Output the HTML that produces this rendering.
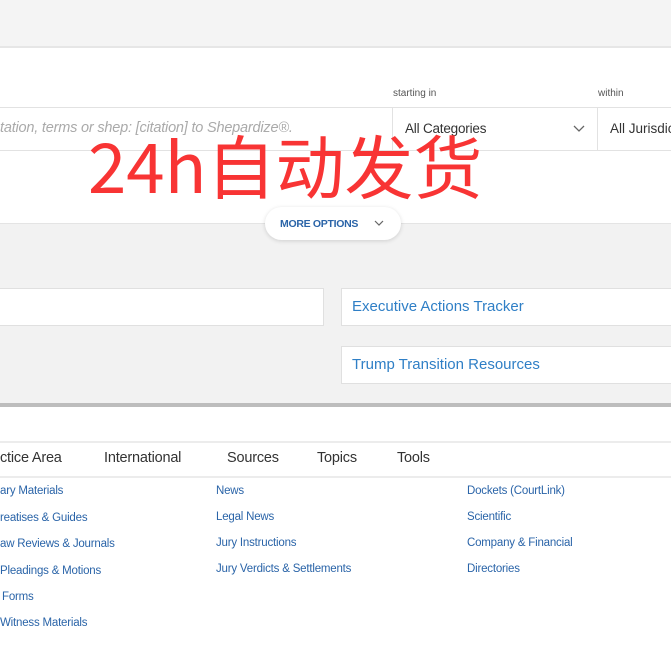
<!DOCTYPE html>
<html><head><meta charset="utf-8"><style>
*{margin:0;padding:0;box-sizing:border-box}
body{width:671px;height:671px;overflow:hidden;background:#fff;font-family:"Liberation Sans",sans-serif;position:relative}
.a{position:absolute}
.lnk{position:absolute;font-size:11.5px;color:#2a64a8;white-space:nowrap;letter-spacing:-0.2px}
.tab{position:absolute;top:450px;font-size:14.5px;color:#333;letter-spacing:-0.2px}
</style></head><body>
<div class="a" style="left:0;top:0;width:671px;height:48px;background:#f4f4f4;border-bottom:2px solid #e6e6e6"></div>
<div class="a" style="left:0;top:223px;width:671px;height:181px;background:#f2f2f2;border-top:1px solid #e4e4e4"></div>
<div class="a" style="left:393px;top:88px;font-size:10px;color:#555">starting in</div>
<div class="a" style="left:598px;top:88px;font-size:10px;color:#555">within</div>
<div class="a" style="left:0;top:107px;width:671px;height:44px;border-top:1px solid #e2e2e2;border-bottom:1px solid #e2e2e2"></div>
<div class="a" style="left:0;top:120px;font-size:14.5px;color:#aaa;font-style:italic;letter-spacing:-0.2px;white-space:nowrap">tation, terms or shep: [citation] to Shepardize®.</div>
<div class="a" style="left:392px;top:107px;width:206px;height:44px;border-left:1px solid #e2e2e2;border-right:1px solid #e2e2e2"></div>
<div class="a" style="left:405px;top:121px;font-size:13.5px;color:#333;letter-spacing:-0.2px">All Categories</div>
<svg class="a" style="left:572px;top:124px" width="14" height="10"><path d="M2 2l5 5 5-5" stroke="#666" stroke-width="1.3" fill="none"/></svg>
<div class="a" style="left:610px;top:121px;font-size:13.5px;color:#333;white-space:nowrap">All Jurisdictions</div>
<div class="a" style="left:88px;top:124px;font-size:69px;line-height:78px;color:#f83434;font-weight:400;font-family:'Noto Sans CJK SC',sans-serif;white-space:nowrap">24h自动发货</div>
<div class="a" style="left:265px;top:207px;width:136px;height:33px;background:#fff;border-radius:17px;box-shadow:0 1px 4px rgba(0,0,0,.15)"></div>
<div class="a" style="left:280px;top:218px;font-size:10.5px;color:#2a64a8;font-weight:bold;letter-spacing:-0.3px">MORE OPTIONS</div>
<svg class="a" style="left:373px;top:219px" width="12" height="8"><path d="M2 2l4 4 4-4" stroke="#666" stroke-width="1.2" fill="none"/></svg>
<div class="a" style="left:-2px;top:288px;width:326px;height:38px;background:#fff;border:1px solid #e0e0e0"></div>
<div class="a" style="left:341px;top:288px;width:340px;height:38px;background:#fff;border:1px solid #e0e0e0"></div>
<div class="a" style="left:352px;top:298px;font-size:15px;color:#2f7fc6">Executive Actions Tracker</div>
<div class="a" style="left:341px;top:346px;width:340px;height:38px;background:#fff;border:1px solid #e0e0e0"></div>
<div class="a" style="left:352px;top:356px;font-size:15px;color:#2f7fc6">Trump Transition Resources</div>
<div class="a" style="left:0;top:403px;width:671px;height:4px;background:#bdbdbd"></div>
<div class="a" style="left:0;top:441px;width:671px;height:37px;border-top:2px solid #ececec;border-bottom:2px solid #ececec"></div>
<div class="tab" style="left:0">ctice Area</div>
<div class="tab" style="left:104px">International</div>
<div class="tab" style="left:227px">Sources</div>
<div class="tab" style="left:317px">Topics</div>
<div class="tab" style="left:397px">Tools</div>
<div class="lnk" style="left:0;top:485px">ary Materials</div>
<div class="lnk" style="left:0;top:512px">reatises &amp; Guides</div>
<div class="lnk" style="left:0;top:538px">aw Reviews &amp; Journals</div>
<div class="lnk" style="left:0;top:565px">Pleadings &amp; Motions</div>
<div class="lnk" style="left:2px;top:591px">Forms</div>
<div class="lnk" style="left:0;top:617px">Witness Materials</div>
<div class="lnk" style="left:216px;top:485px">News</div>
<div class="lnk" style="left:216px;top:511px">Legal News</div>
<div class="lnk" style="left:216px;top:537px">Jury Instructions</div>
<div class="lnk" style="left:216px;top:563px">Jury Verdicts &amp; Settlements</div>
<div class="lnk" style="left:467px;top:485px">Dockets (CourtLink)</div>
<div class="lnk" style="left:467px;top:511px">Scientific</div>
<div class="lnk" style="left:467px;top:537px">Company &amp; Financial</div>
<div class="lnk" style="left:467px;top:563px">Directories</div>
</body></html>
